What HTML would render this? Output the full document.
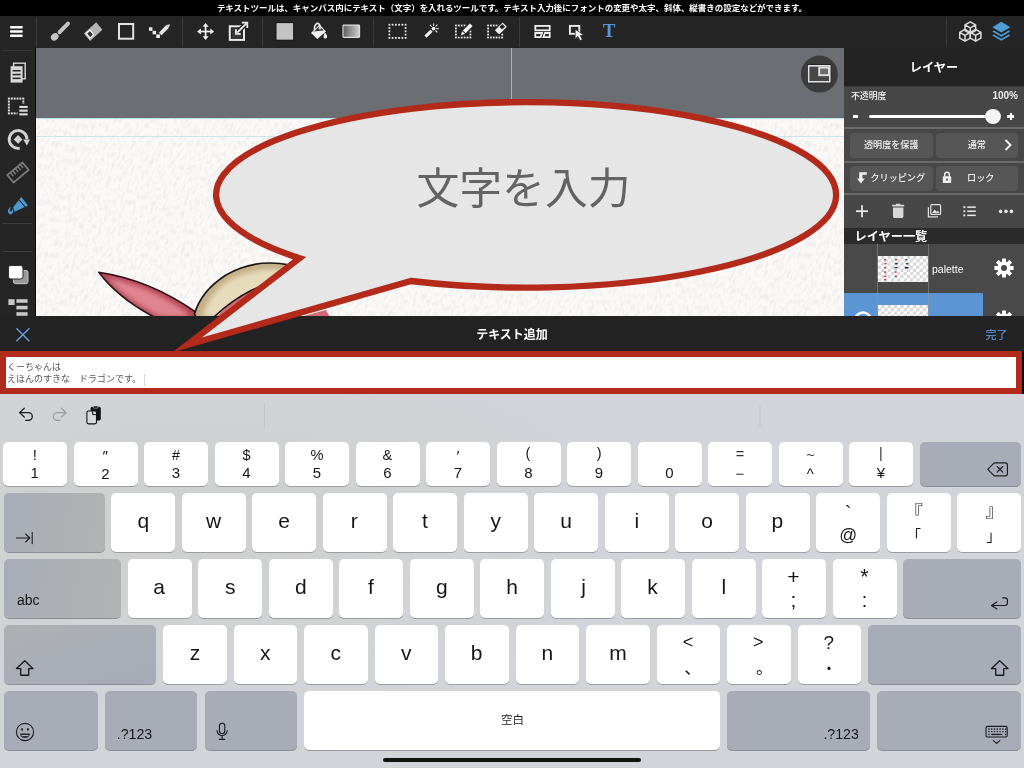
<!DOCTYPE html><html lang="ja"><head><meta charset="utf-8"><title>テキスト追加</title><style>
*{margin:0;padding:0;box-sizing:border-box}
html,body{width:1024px;height:768px;overflow:hidden;background:#000}
body{position:relative;font-family:"Liberation Sans","Noto Sans CJK JP",sans-serif;color:#fff}
.abs{position:absolute}
#top,#rp,#bar,#inp,#kb{will-change:transform}
#top{left:0;top:0;width:1024px;height:16px;background:#000;color:#fff;font-size:8.47px;font-weight:700;text-align:center;line-height:16px;white-space:nowrap;letter-spacing:0}
#tb{left:0;top:16px;width:1024px;height:32px;background:#252525}
#sb{left:0;top:48px;width:36px;height:268px;background:#252525;border-right:1px solid #0c0c0c}
.vsep{position:absolute;top:17px;width:1px;height:30px;background:#3b3b3b}
.hsep{position:absolute;left:2px;width:30px;height:1px;background:#3d3d3d}
#cv{left:36px;top:48px;width:808px;height:268px;background:#6b6e73;overflow:hidden}
#paper{left:0;top:70px;width:808px;height:198px;background:#faf9f7}
#rp{left:844px;top:48px;width:180px;height:268px;background:#474747;overflow:hidden}
#rph{left:0;top:0;width:180px;height:38px;background:#232323;text-align:center;font-weight:700;font-size:12.2px;line-height:40px}
.btn{position:absolute;height:25px;background:#565656;border-radius:4px;font-size:9.1px;font-weight:500;line-height:25px;text-align:center;color:#f2f2f2;white-space:nowrap}
.div{position:absolute;left:0;width:180px;height:2px;background:#6a6a6a}
#bar{left:0;top:316px;width:1024px;height:35px;background:#232323}
#inp{left:0;top:351px;width:1022px;height:43px;background:#fff;border:6px solid #b22a1b}
#inp div{position:absolute;left:1px;top:4px;font-size:9px;line-height:12.4px;color:#555;white-space:pre}
#kb{left:0;top:394px;width:1024px;height:374px;background:radial-gradient(ellipse 460px 190px at 190px 130px,#cfd1d1 0%,#cfd1d1 35%,rgba(207,209,209,0) 100%),#d2d4da}
.k{position:absolute;background:#fff;border-radius:5px;box-shadow:0 1px 0 #9c9ea3;color:#111;text-align:center}
.g{background:#a8acb7;box-shadow:0 1px 0 #8b8e96}
.gt{background:linear-gradient(100deg,#a8acb7 0%,#adb1b5 45%,#b0b3b1 100%)}
.gs{background:linear-gradient(165deg,#aeb1b2 0%,#aaaeb6 45%,#a7abb7 100%)}
.gl{position:absolute;line-height:1;white-space:nowrap}
</style></head><body>
<div id="top" class="abs">テキストツールは、キャンバス内にテキスト（文字）を入れるツールです。テキスト入力後にフォントの変更や太字、斜体、縦書きの設定などができます。</div>
<div id="tb" class="abs"></div>
<div class="vsep" style="left:36px"></div>
<div class="vsep" style="left:182px"></div>
<div class="vsep" style="left:262px"></div>
<div class="vsep" style="left:373px"></div>
<div class="vsep" style="left:519px"></div>
<div class="vsep" style="left:946px"></div>
<div id="sb" class="abs"></div>
<div id="cv" class="abs"><div id="paper" class="abs"></div></div>
<div id="rp" class="abs">
<div id="rph" class="abs">レイヤー</div>
<div class="abs" style="left:0;top:38px;width:180px;height:1px;background:#3a3a3a"></div>
<div class="abs" style="left:7px;top:42px;font-size:8.9px;font-weight:500;line-height:12px;color:#f4f4f4">不透明度</div>
<div class="abs" style="right:6px;top:42px;font-size:10px;font-weight:700;line-height:12px;color:#ececec">100%</div>
<div class="abs" style="left:9px;top:67.2px;width:5px;height:2.4px;background:#fff"></div>
<div class="abs" style="left:163.4px;top:67.3px;width:7px;height:2.4px;background:#fff"></div><div class="abs" style="left:165.7px;top:65px;width:2.4px;height:7px;background:#fff"></div>
<div class="abs" style="left:24.5px;top:67px;width:125px;height:3px;border-radius:1.5px;background:#fff"></div>
<div class="abs" style="left:141.4px;top:60.8px;width:15.2px;height:15.2px;border-radius:8px;background:#f4f4f4;box-shadow:0 0 1.5px rgba(0,0,0,.5)"></div>
<div class="div" style="top:79px"></div>
<div class="btn" style="left:6px;top:84.5px;width:82.5px">透明度を保護</div>
<div class="btn" style="left:91.5px;top:84.5px;width:82.5px">通常</div>
<svg class="abs" style="left:159px;top:90px" width="10" height="14" viewBox="0 0 10 14"><polyline points="2.5,2 7.5,7 2.5,12" fill="none" stroke="#f0f0f0" stroke-width="1.9"/></svg>
<div class="div" style="top:112.5px"></div>
<div class="btn" style="left:6px;top:117.5px;width:82.5px;padding-left:13px">クリッピング</div>
<svg class="abs" style="left:12px;top:123px" width="12" height="14" viewBox="0 0 12 14"><path d="M3.2 1.2 H10.8 V3.8 H6.4 V7.6 H8.8 L4.9 12.6 L1 7.6 H3.2Z" fill="#f0f0f0"/></svg>
<div class="btn" style="left:91.5px;top:117.5px;width:82.5px;padding-left:8px">ロック</div>
<svg class="abs" style="left:98px;top:123px" width="10" height="13" viewBox="0 0 10 13"><path d="M2.7 5.4 V3.6 A2.3 2.3 0 0 1 7.3 3.6 V5.4" fill="none" stroke="#f0f0f0" stroke-width="1.4"/><rect x="0.8" y="5.2" width="8.4" height="6.8" rx="0.8" fill="#f0f0f0"/><rect x="4.3" y="7.4" width="1.4" height="2.4" fill="#565656"/></svg>
<div class="div" style="top:145px"></div>
<svg class="abs" style="left:0;top:147px" width="180" height="33" viewBox="0 0 180 33">
<g stroke="#f0f0f0" stroke-width="1.7"><line x1="12" y1="16.2" x2="24" y2="16.2"/><line x1="18" y1="10.2" x2="18" y2="22.2"/></g>
<path d="M49 12.4 H59.4 V21.6 A1.4 1.4 0 0 1 58 23 H50.4 A1.4 1.4 0 0 1 49 21.6Z M48.2 9.8 H60.2 V11.4 H48.2Z M52 8.8 H56.4 V9.9 H52Z" fill="#d8d8d8"/>
<g fill="none" stroke="#e0e0e0" stroke-width="1.2"><rect x="86.8" y="9.6" width="9.8" height="9.8" rx="1"/><path d="M84.4 12.2 V21.8 H94"/></g>
<path d="M88 18 L90.6 14.6 L92.6 16.8 L93.8 15.8 L95.6 18Z" fill="#e0e0e0"/>
<g fill="#e8e8e8"><rect x="119.4" y="11.2" width="1.9" height="1.9"/><rect x="119.4" y="15.3" width="1.9" height="1.9"/><rect x="119.4" y="19.4" width="1.9" height="1.9"/><rect x="123.2" y="11.4" width="8.6" height="1.5"/><rect x="123.2" y="15.5" width="8.6" height="1.5"/><rect x="123.2" y="19.6" width="8.6" height="1.5"/></g>
<g fill="#e8e8e8"><circle cx="156.6" cy="16.4" r="1.8"/><circle cx="162" cy="16.4" r="1.8"/><circle cx="167.4" cy="16.4" r="1.8"/></g>
</svg>
<div class="abs" style="left:0;top:180px;width:180px;height:15.5px;background:#2b2b2b"></div>
<div class="abs" style="left:10.5px;top:179.5px;font-size:12.2px;font-weight:700;line-height:18px;color:#fff;white-space:nowrap">レイヤー一覧</div>
<div class="abs" style="left:0;top:195.5px;width:180px;height:50px;background:#494949"></div>
<div class="abs" style="left:0;top:245px;width:139px;height:23px;background:#5b95d4"></div>
<div class="abs" style="left:139px;top:245px;width:41px;height:23px;background:#494949"></div>
<div class="abs" style="left:33px;top:195.5px;width:1px;height:73px;background:rgba(150,150,150,.55)"></div>
<div class="abs" style="left:84px;top:195.5px;width:1px;height:73px;background:rgba(150,150,150,.55)"></div>
<div class="abs" style="left:34px;top:207.5px;width:50px;height:26.5px;background-color:#fff;background-image:linear-gradient(45deg,#d4d4d4 25%,transparent 25%,transparent 75%,#d4d4d4 75%),linear-gradient(45deg,#d4d4d4 25%,transparent 25%,transparent 75%,#d4d4d4 75%);background-size:6.4px 6.4px;background-position:0 0,3.2px 3.2px"></div><div class="abs" style="left:34px;top:257px;width:50px;height:11px;background-color:#fff;background-image:linear-gradient(45deg,#d4d4d4 25%,transparent 25%,transparent 75%,#d4d4d4 75%),linear-gradient(45deg,#d4d4d4 25%,transparent 25%,transparent 75%,#d4d4d4 75%);background-size:6.4px 6.4px;background-position:0 0,3.2px 3.2px"></div>
<svg class="abs" style="left:34px;top:207.5px" width="50" height="27" viewBox="0 0 50 27"><g fill="#b33"><rect x="6" y="3" width="2" height="1.4"/><rect x="6.6" y="7" width="2" height="1.4"/><rect x="6" y="11" width="2" height="1.4"/><rect x="6" y="15.4" width="2" height="1.4"/><rect x="6.4" y="19.6" width="2" height="1.4"/><rect x="6" y="23" width="2" height="1.4"/><rect x="17" y="3" width="2" height="1.4"/><rect x="16.6" y="15.4" width="2" height="1.4"/><rect x="17" y="19.6" width="2" height="1.4"/></g><g fill="#246"><rect x="17" y="7" width="3" height="1.4"/><rect x="16.4" y="11" width="3" height="1.4"/><rect x="27.4" y="3" width="2" height="1.4"/><rect x="28" y="7" width="2.4" height="1.4"/></g><rect x="27" y="11" width="3.4" height="1.4" fill="#111"/></svg>
<div class="abs" style="left:88px;top:214.5px;font-size:10.5px;line-height:12px;color:#fff">palette</div>
<svg class="abs" style="left:149.5px;top:210px" width="20" height="20" viewBox="-10 -10 20 20"><g fill="#fff"><circle r="6.6"/><rect x="-2" y="-9.6" width="4" height="5" rx="0.6" transform="rotate(0)"/><rect x="-2" y="-9.6" width="4" height="5" rx="0.6" transform="rotate(45)"/><rect x="-2" y="-9.6" width="4" height="5" rx="0.6" transform="rotate(90)"/><rect x="-2" y="-9.6" width="4" height="5" rx="0.6" transform="rotate(135)"/><rect x="-2" y="-9.6" width="4" height="5" rx="0.6" transform="rotate(180)"/><rect x="-2" y="-9.6" width="4" height="5" rx="0.6" transform="rotate(225)"/><rect x="-2" y="-9.6" width="4" height="5" rx="0.6" transform="rotate(270)"/><rect x="-2" y="-9.6" width="4" height="5" rx="0.6" transform="rotate(315)"/></g><circle r="3" fill="#494949"/></svg>
<svg class="abs" style="left:149.5px;top:261.5px" width="20" height="20" viewBox="-10 -10 20 20"><g fill="#fff"><circle r="6.6"/><rect x="-2" y="-9.6" width="4" height="5" rx="0.6" transform="rotate(0)"/><rect x="-2" y="-9.6" width="4" height="5" rx="0.6" transform="rotate(45)"/><rect x="-2" y="-9.6" width="4" height="5" rx="0.6" transform="rotate(90)"/><rect x="-2" y="-9.6" width="4" height="5" rx="0.6" transform="rotate(135)"/><rect x="-2" y="-9.6" width="4" height="5" rx="0.6" transform="rotate(180)"/><rect x="-2" y="-9.6" width="4" height="5" rx="0.6" transform="rotate(225)"/><rect x="-2" y="-9.6" width="4" height="5" rx="0.6" transform="rotate(270)"/><rect x="-2" y="-9.6" width="4" height="5" rx="0.6" transform="rotate(315)"/></g><circle r="3" fill="#494949"/></svg>
<svg class="abs" style="left:8px;top:258px" width="22" height="12" viewBox="0 0 22 12"><circle cx="11" cy="14.5" r="8" fill="none" stroke="#fff" stroke-width="2.6"/></svg>
</div>

<svg class="abs" style="left:0;top:0" width="1024" height="316" viewBox="0 0 1024 316">
<!-- hamburger -->
<g fill="#fff"><rect x="10" y="26.1" width="12.8" height="2.4" rx="1"/><rect x="10" y="30.3" width="12.8" height="2.4" rx="1"/><rect x="10" y="34.5" width="12.8" height="2.4" rx="1"/></g>
<!-- brush -->
<g stroke="#c4c4c4" fill="#c4c4c4"><line x1="68" y1="23.6" x2="59.6" y2="32.2" stroke-width="4" stroke-linecap="round"/><ellipse cx="54.7" cy="36.9" rx="4.1" ry="3.4" transform="rotate(-40 54.7 36.9)" stroke="none"/></g>
<!-- eraser -->
<polygon points="83.9,33.4 96.2,22.2 102.4,29.7 90.1,40.9" fill="#b4b4b4"/>
<polygon points="86.3,33.5 89.9,30.2 93.6,34.7 90,38" fill="#303030" stroke="#f4f4f4" stroke-width="1.3"/>
<!-- square -->
<rect x="119" y="24" width="14.2" height="14.7" fill="none" stroke="#e2e2e2" stroke-width="2"/>
<!-- dot pen -->
<g fill="#f0f0f0"><rect x="148.9" y="27.3" width="3.5" height="3.5"/><rect x="152.6" y="30.8" width="3.5" height="3.5"/><rect x="156.3" y="34.4" width="3.6" height="3.6"/></g>
<line x1="160.2" y1="34" x2="167.6" y2="26.4" stroke="#e4e4e4" stroke-width="3.8"/><polygon points="166.3,25 169,27.6 169.9,24.2" fill="#e4e4e4"/>
<!-- move -->
<g stroke="#f0f0f0" stroke-width="1.7" fill="none"><line x1="198.6" y1="31.5" x2="212.6" y2="31.5"/><line x1="205.6" y1="24.5" x2="205.6" y2="38.5"/></g>
<g fill="#f0f0f0"><polygon points="205.6,23 202.6,26.8 208.6,26.8"/><polygon points="205.6,40 202.6,36.2 208.6,36.2"/><polygon points="197.1,31.5 200.9,28.5 200.9,34.5"/><polygon points="214.1,31.5 210.3,28.5 210.3,34.5"/></g>
<!-- transform/export -->
<rect x="229.8" y="26.3" width="14.2" height="13.6" fill="none" stroke="#eaeaea" stroke-width="2"/>
<rect x="232.2" y="28.6" width="9.4" height="9" fill="#3a3a3a"/>
<line x1="237.3" y1="32.5" x2="246.5" y2="23.3" stroke="#252525" stroke-width="4.6"/>
<line x1="237.3" y1="32.5" x2="246.5" y2="23.3" stroke="#eaeaea" stroke-width="1.8"/>
<polyline points="241.8,22.6 247.3,22.6 247.3,28.1" fill="none" stroke="#eaeaea" stroke-width="1.8"/>
<polyline points="236,29.2 236,33.9 240.7,33.9" fill="none" stroke="#eaeaea" stroke-width="1.8"/>
<!-- filled square -->
<rect x="276" y="22.6" width="17.7" height="17.6" fill="#c3c3c3" stroke="#111" stroke-width="1"/>
<!-- bucket -->
<g>
<polygon points="311,33 319.5,24.6 326,31.5 317.3,38.9" fill="#f2f2f2"/>
<polygon points="313.5,31.6 319.4,26.2 323.6,30.4" fill="#3a3a3a"/>
<path d="M314.6 30.5 C313.6 24.5 317.2 22.4 319 24 C320.4 25.4 320.2 28 319.6 29.4" fill="none" stroke="#f2f2f2" stroke-width="1.5"/>
<path d="M324.6 32.2 C327.2 34.5 327.6 36.8 326.6 38 C325.7 39 323.9 38.7 323.6 37.2 C323.3 35.8 324.4 34.4 324.6 32.2Z" fill="#f2f2f2"/>
</g>
<!-- gradient -->
<defs><linearGradient id="gr" x1="0" y1="0" x2="1" y2="0"><stop offset="0" stop-color="#5e5e5e"/><stop offset="1" stop-color="#cfcfcf"/></linearGradient></defs>
<rect x="343" y="25.1" width="16.6" height="12.3" fill="url(#gr)" stroke="#e0e0e0" stroke-width="1.1" rx="0.8"/>
<rect x="388.50" y="23.80" width="1.8" height="1.8" fill="#e8e8e8"/><rect x="388.50" y="37.00" width="1.8" height="1.8" fill="#e8e8e8"/><rect x="391.74" y="23.80" width="1.8" height="1.8" fill="#e8e8e8"/><rect x="391.74" y="37.00" width="1.8" height="1.8" fill="#e8e8e8"/><rect x="394.98" y="23.80" width="1.8" height="1.8" fill="#e8e8e8"/><rect x="394.98" y="37.00" width="1.8" height="1.8" fill="#e8e8e8"/><rect x="398.22" y="23.80" width="1.8" height="1.8" fill="#e8e8e8"/><rect x="398.22" y="37.00" width="1.8" height="1.8" fill="#e8e8e8"/><rect x="401.46" y="23.80" width="1.8" height="1.8" fill="#e8e8e8"/><rect x="401.46" y="37.00" width="1.8" height="1.8" fill="#e8e8e8"/><rect x="404.70" y="23.80" width="1.8" height="1.8" fill="#e8e8e8"/><rect x="404.70" y="37.00" width="1.8" height="1.8" fill="#e8e8e8"/><rect x="388.50" y="27.10" width="1.8" height="1.8" fill="#e8e8e8"/><rect x="404.70" y="27.10" width="1.8" height="1.8" fill="#e8e8e8"/><rect x="388.50" y="30.40" width="1.8" height="1.8" fill="#e8e8e8"/><rect x="404.70" y="30.40" width="1.8" height="1.8" fill="#e8e8e8"/><rect x="388.50" y="33.70" width="1.8" height="1.8" fill="#e8e8e8"/><rect x="404.70" y="33.70" width="1.8" height="1.8" fill="#e8e8e8"/>
<!-- wand -->
<line x1="425.5" y1="36.6" x2="431.6" y2="30.6" stroke="#f0f0f0" stroke-width="3"/>
<circle cx="433.6" cy="28.6" r="1.9" fill="#f0f0f0"/>
<g stroke="#e0e0e0" stroke-width="1.1"><line x1="433.6" y1="23.6" x2="433.6" y2="26"/><line x1="436.2" y1="28.6" x2="438.8" y2="28.6"/><line x1="435.5" y1="26.7" x2="437.5" y2="24.7"/><line x1="435.5" y1="30.5" x2="437.3" y2="32.3"/><line x1="431.7" y1="26.7" x2="429.9" y2="24.9"/></g>
<rect x="455.00" y="24.60" width="1.8" height="1.8" fill="#e8e8e8"/><rect x="455.00" y="36.60" width="1.8" height="1.8" fill="#e8e8e8"/><rect x="457.90" y="24.60" width="1.8" height="1.8" fill="#e8e8e8"/><rect x="457.90" y="36.60" width="1.8" height="1.8" fill="#e8e8e8"/><rect x="460.80" y="24.60" width="1.8" height="1.8" fill="#e8e8e8"/><rect x="460.80" y="36.60" width="1.8" height="1.8" fill="#e8e8e8"/><rect x="463.70" y="24.60" width="1.8" height="1.8" fill="#e8e8e8"/><rect x="463.70" y="36.60" width="1.8" height="1.8" fill="#e8e8e8"/><rect x="466.60" y="24.60" width="1.8" height="1.8" fill="#e8e8e8"/><rect x="466.60" y="36.60" width="1.8" height="1.8" fill="#e8e8e8"/><rect x="469.50" y="24.60" width="1.8" height="1.8" fill="#e8e8e8"/><rect x="469.50" y="36.60" width="1.8" height="1.8" fill="#e8e8e8"/><rect x="455.00" y="27.60" width="1.8" height="1.8" fill="#e8e8e8"/><rect x="469.50" y="27.60" width="1.8" height="1.8" fill="#e8e8e8"/><rect x="455.00" y="30.60" width="1.8" height="1.8" fill="#e8e8e8"/><rect x="469.50" y="30.60" width="1.8" height="1.8" fill="#e8e8e8"/><rect x="455.00" y="33.60" width="1.8" height="1.8" fill="#e8e8e8"/><rect x="469.50" y="33.60" width="1.8" height="1.8" fill="#e8e8e8"/>
<!-- select pen -->
<polygon points="460.5,35.5 462,31 470,22.8 473.2,25.8 465.2,34" fill="#252525" stroke="#252525" stroke-width="2.4"/>
<polygon points="460.8,35.2 462.3,31.3 465,33.9" fill="#f2f2f2"/>
<polygon points="462.9,30.6 469.9,23.4 472.6,26 465.6,33.2" fill="#f2f2f2"/>
<rect x="487.20" y="24.60" width="1.8" height="1.8" fill="#e8e8e8"/><rect x="487.20" y="36.60" width="1.8" height="1.8" fill="#e8e8e8"/><rect x="490.02" y="24.60" width="1.8" height="1.8" fill="#e8e8e8"/><rect x="490.02" y="36.60" width="1.8" height="1.8" fill="#e8e8e8"/><rect x="492.84" y="24.60" width="1.8" height="1.8" fill="#e8e8e8"/><rect x="492.84" y="36.60" width="1.8" height="1.8" fill="#e8e8e8"/><rect x="495.66" y="24.60" width="1.8" height="1.8" fill="#e8e8e8"/><rect x="495.66" y="36.60" width="1.8" height="1.8" fill="#e8e8e8"/><rect x="498.48" y="24.60" width="1.8" height="1.8" fill="#e8e8e8"/><rect x="498.48" y="36.60" width="1.8" height="1.8" fill="#e8e8e8"/><rect x="501.30" y="24.60" width="1.8" height="1.8" fill="#e8e8e8"/><rect x="501.30" y="36.60" width="1.8" height="1.8" fill="#e8e8e8"/><rect x="487.20" y="27.60" width="1.8" height="1.8" fill="#e8e8e8"/><rect x="501.30" y="27.60" width="1.8" height="1.8" fill="#e8e8e8"/><rect x="487.20" y="30.60" width="1.8" height="1.8" fill="#e8e8e8"/><rect x="501.30" y="30.60" width="1.8" height="1.8" fill="#e8e8e8"/><rect x="487.20" y="33.60" width="1.8" height="1.8" fill="#e8e8e8"/><rect x="501.30" y="33.60" width="1.8" height="1.8" fill="#e8e8e8"/>
<!-- select eraser -->
<polygon points="494.5,30.2 502.6,22 507.3,26.8 499.2,35" fill="#252525" stroke="#252525" stroke-width="2.2"/>
<polygon points="494.9,30.2 502.6,22.5 506.9,26.8 499.2,34.5" fill="#f2f2f2"/>
<polygon points="499.4,26.9 502.3,24 505,26.7 502.1,29.6" fill="#252525"/>
<!-- panel layout icon -->
<g fill="none" stroke="#f0f0f0" stroke-width="1.8"><rect x="535.3" y="25.9" width="14.4" height="4.4"/><polygon points="535.3,33 542,33 540.6,37.1 535.3,37.1"/><polygon points="545,33 549.7,33 549.7,37.1 543.4,37.1"/></g>
<!-- select cursor -->
<rect x="569.9" y="25.9" width="9.4" height="7.9" fill="none" stroke="#f0f0f0" stroke-width="1.9"/>
<polygon points="575.2,29.2 575.2,38.9 577.9,36.6 580.2,40.6 582.4,39.4 580.2,35.6 583.6,35" fill="#f6f6f6" stroke="#252525" stroke-width="0.7"/>
<!-- cubes -->
<g fill="none" stroke="#dcdcdc" stroke-width="1.5" stroke-linejoin="round">
<path d="M970.3 21.8 L975.6 24.8 L975.6 30.6 L970.3 33.6 L965 30.6 L965 24.8Z M965 24.8 L970.3 27.8 L975.6 24.8 M970.3 27.8 L970.3 33.6"/>
<path d="M965 30.8 L970.3 33.8 L970.3 39.6 L965 42.6 L959.7 39.6 L959.7 33.8Z M959.7 33.8 L965 36.8 L970.3 33.8 M965 36.8 L965 42.6" transform="translate(0,-1.4)"/>
<path d="M975.6 30.8 L980.9 33.8 L980.9 39.6 L975.6 42.6 L970.3 39.6 L970.3 33.8Z M970.3 33.8 L975.6 36.8 L980.9 33.8 M975.6 36.8 L975.6 42.6" transform="translate(0,-1.4)"/>
</g>
<!-- layers -->
<g fill="#4d9fd6"><polygon points="1001.3,21.8 1010.3,27.2 1001.3,32.6 992.3,27.2"/>
<polygon points="993.9,30.4 1001.3,34.8 1008.7,30.4 1010.3,31.4 1001.3,36.8 992.3,31.4"/>
<polygon points="993.9,34.4 1001.3,38.8 1008.7,34.4 1010.3,35.4 1001.3,40.8 992.3,35.4"/></g>
<!-- T -->
<text x="609" y="37" text-anchor="middle" font-family="'Liberation Serif',serif" font-weight="700" font-size="19" fill="#5b93d3">T</text>

<!-- sidebar: documents -->
<rect x="13.6" y="63.2" width="11.6" height="15.6" fill="#252525" stroke="#d8d8d8" stroke-width="1.4"/>
<rect x="10.6" y="66.2" width="12" height="16.4" fill="#d8d8d8"/>
<g fill="#252525"><rect x="12.6" y="70" width="8" height="1.5"/><rect x="12.6" y="73.8" width="8" height="1.5"/><rect x="12.6" y="77.6" width="8" height="1.5"/></g>
<rect x="7.90" y="97.60" width="2" height="2" fill="#dcdcdc"/><rect x="7.90" y="112.40" width="2" height="2" fill="#dcdcdc"/><rect x="10.78" y="97.60" width="2" height="2" fill="#dcdcdc"/><rect x="10.78" y="112.40" width="2" height="2" fill="#dcdcdc"/><rect x="13.66" y="97.60" width="2" height="2" fill="#dcdcdc"/><rect x="13.66" y="112.40" width="2" height="2" fill="#dcdcdc"/><rect x="16.54" y="97.60" width="2" height="2" fill="#dcdcdc"/><rect x="16.54" y="112.40" width="2" height="2" fill="#dcdcdc"/><rect x="19.42" y="97.60" width="2" height="2" fill="#dcdcdc"/><rect x="19.42" y="112.40" width="2" height="2" fill="#dcdcdc"/><rect x="22.30" y="97.60" width="2" height="2" fill="#dcdcdc"/><rect x="22.30" y="112.40" width="2" height="2" fill="#dcdcdc"/><rect x="7.90" y="100.56" width="2" height="2" fill="#dcdcdc"/><rect x="22.30" y="100.56" width="2" height="2" fill="#dcdcdc"/><rect x="7.90" y="103.52" width="2" height="2" fill="#dcdcdc"/><rect x="22.30" y="103.52" width="2" height="2" fill="#dcdcdc"/><rect x="7.90" y="106.48" width="2" height="2" fill="#dcdcdc"/><rect x="22.30" y="106.48" width="2" height="2" fill="#dcdcdc"/><rect x="7.90" y="109.44" width="2" height="2" fill="#dcdcdc"/><rect x="22.30" y="109.44" width="2" height="2" fill="#dcdcdc"/>
<rect x="17.5" y="104" width="12" height="12.5" fill="#252525"/>
<g fill="#dcdcdc"><rect x="19.3" y="105.9" width="8.4" height="2.1"/><rect x="19.3" y="109.6" width="8.4" height="2.1"/><rect x="19.3" y="113.3" width="8.4" height="2.1"/></g>
<!-- rotate -->
<path d="M19.7 148.2 A8.9 8.9 0 1 1 27 139.2" fill="none" stroke="#d2d2d2" stroke-width="2.9"/>
<polygon points="23.2,139.4 30,139.4 26.9,145.6" fill="#d2d2d2"/>
<polygon points="18.1,135 22.5,139.4 18.1,143.8 13.7,139.4" fill="#d2d2d2"/>
<!-- ruler -->
<g transform="rotate(-40 18 172.5)"><rect x="8.2" y="167.6" width="19.6" height="9.8" fill="none" stroke="#7d7d7d" stroke-width="1.7"/><g stroke="#7d7d7d" stroke-width="1.4"><line x1="12" y1="168" x2="12" y2="172.4"/><line x1="15.2" y1="168" x2="15.2" y2="172.4"/><line x1="18.4" y1="168" x2="18.4" y2="172.4"/><line x1="21.6" y1="168" x2="21.6" y2="172.4"/><line x1="24.8" y1="168" x2="24.8" y2="172.4"/></g></g>
<!-- pen (blue) -->
<g fill="#4b9ad2"><polygon points="21.3,197 28,205.6 14.6,211.8 13.2,207.2"/><path d="M12.2 208.4 L13.4 212.2 L11 214.4 C9 214.6 7.6 212.6 8 210.6 C8.3 209.2 9.6 207.6 11 206.6 L9.6 210.6 L11.4 212Z"/></g>
<line x1="18.8" y1="199.5" x2="25.6" y2="207.5" stroke="#252525" stroke-width="1.1"/>
<!-- swatches -->
<rect x="13.4" y="270.4" width="14.6" height="13.3" rx="2.2" fill="#9a9a9a" stroke="#c6c6c6" stroke-width="1"/>
<rect x="8.4" y="265.4" width="14.6" height="13.6" rx="2.4" fill="#fdfdfd" stroke="#252525" stroke-width="1"/>
<!-- list -->
<g fill="#c8c8c8"><rect x="8.4" y="299.2" width="6.2" height="5.8"/><rect x="16.4" y="299.2" width="11.2" height="3.6"/><rect x="16.4" y="305.8" width="11.2" height="3.6"/><rect x="16.4" y="312.2" width="11.2" height="3.6"/></g>
<!-- circle button -->
<circle cx="819.4" cy="74.1" r="18.5" fill="#3c3c3c"/>
<rect x="807.2" y="64.4" width="24" height="18.8" fill="#151515"/>
<rect x="808.6" y="65.8" width="21.2" height="16" fill="#484848" stroke="#e2e2e2" stroke-width="1.6"/>
<rect x="819.2" y="67.6" width="9.8" height="7.6" fill="#6c6c6c" stroke="#e2e2e2" stroke-width="1.9"/>
</svg>

<div class="hsep" style="top:50px;background:#343434"></div><div class="hsep" style="top:223px"></div><div class="hsep" style="top:251px"></div>
<div id="bar" class="abs">
<svg class="abs" style="left:15px;top:11px" width="16" height="16" viewBox="0 0 16 16"><g stroke="#6b9bd8" stroke-width="1.5"><line x1="1.4" y1="1.2" x2="14.4" y2="14.2"/><line x1="14.4" y1="1.2" x2="1.4" y2="14.2"/></g></svg>
<div class="abs" style="left:0;top:0;width:1024px;text-align:center;font-size:12px;font-weight:700;line-height:39px;color:#fff">テキスト追加</div>
<div class="abs" style="right:16.5px;top:0;font-size:11px;font-weight:500;line-height:38px;color:#5689cc">完了</div>
</div>

<svg class="abs" style="left:0;top:0" width="1024" height="768" viewBox="0 0 1024 768">
<defs>
<filter id="ptex" x="0" y="0" width="100%" height="100%"><feTurbulence type="fractalNoise" baseFrequency="0.34 0.17" numOctaves="2" seed="11" result="n"/><feColorMatrix type="matrix" values="0 0 0 0 0.62  0 0 0 0 0.62  0 0 0 0 0.6  1.6 0 0 0 -0.72"/></filter>
<linearGradient id="ear" x1="0" y1="0" x2="1" y2="1"><stop offset="0" stop-color="#c9505f"/><stop offset="0.55" stop-color="#e07482"/><stop offset="1" stop-color="#c25261"/></linearGradient>
<filter id="soft" x="-20%" y="-20%" width="140%" height="140%"><feGaussianBlur stdDeviation="2.6"/></filter>
<clipPath id="earclip"><path d="M98.8 272.3 Q150 280 195.5 312 L197 317 L154 317 Q118 298 98.8 272.3Z"/></clipPath>
<clipPath id="hornclip"><path d="M194.5 314 Q201 291 226 275 Q255 258 290 265 L300 270 L252 290 Q232 300 214 317 L196 317Z"/></clipPath>
<clipPath id="cvclip"><rect x="36.5" y="48" width="807.5" height="268"/></clipPath>
</defs>
<g clip-path="url(#cvclip)">
<rect x="36" y="118" width="900" height="198" filter="url(#ptex)" opacity="0.5" transform="skewX(-14)" />
<rect x="36" y="118" width="808" height="1" fill="#b6e1e8"/>
<rect x="36" y="136" width="808" height="1" fill="#c6e8ec"/>
<rect x="511" y="48" width="1" height="70" fill="#7cc4d0"/>
<path d="M216 317 Q232 300 252 290 L300 290 L300 317Z" fill="#d46a78"/>
<g clip-path="url(#earclip)"><path d="M98.8 272.3 Q150 280 195.5 312 L197 317 L154 317 Q118 298 98.8 272.3Z" fill="#b04453"/><path d="M106 277 Q150 286 188 313 L188 317 L160 317 Q124 298 106 277Z" fill="#e08490" filter="url(#soft)"/></g>
<path d="M98.8 272.3 Q150 280 195.5 312 L197 317 L154 317 Q118 298 98.8 272.3Z" fill="none" stroke="#2b1216" stroke-width="1.6" stroke-linejoin="round"/>
<g clip-path="url(#hornclip)"><rect x="190" y="255" width="115" height="65" fill="#c4b088"/><path d="M203 317 Q208 294 230 280 Q258 265 292 271 L300 276 L256 296 Q238 305 224 317Z" fill="#e6dbbb" filter="url(#soft)"/></g>
<path d="M194.5 314 Q201 291 226 275 Q255 258 290 265 L300 270 L252 290 Q232 300 214 317 L196 317Z" fill="none" stroke="#1a1410" stroke-width="1.6" stroke-linejoin="round"/>
<path d="M300 317 L326 310 L330 317Z" fill="#d46a78"/>
</g>
</svg>
<svg class="abs" style="left:0;top:0" width="1024" height="768" viewBox="0 0 1024 768">
<path d="M299.6 258.2 A310 92.75 0 1 1 411 281 L187 345Z" fill="#e6e6e6" stroke="#b3291a" stroke-width="6.3" stroke-linejoin="miter" stroke-miterlimit="12"/>
<text x="523.5" y="204" text-anchor="middle" font-family="'Liberation Sans','Noto Sans CJK JP',sans-serif" font-weight="400" font-size="42.8" fill="#636363">文字を入力</text>
</svg>

<div id="inp" class="abs"><div>くーちゃんは
えほんのすきな　ドラゴンです。</div><i style="position:absolute;left:137.5px;top:16.5px;width:1px;height:12px;background:#d8d8dc"></i></div>
<div id="kb" class="abs"><div class="k " style="left:3.25px;top:48px;width:63.75px;height:44px"></div><div class="k " style="left:73.75px;top:48px;width:63.75px;height:44px"></div><div class="k " style="left:144.25px;top:48px;width:63.75px;height:44px"></div><div class="k " style="left:214.75px;top:48px;width:63.75px;height:44px"></div><div class="k " style="left:285.25px;top:48px;width:63.75px;height:44px"></div><div class="k " style="left:355.75px;top:48px;width:63.75px;height:44px"></div><div class="k " style="left:426.25px;top:48px;width:63.75px;height:44px"></div><div class="k " style="left:496.75px;top:48px;width:63.75px;height:44px"></div><div class="k " style="left:567.25px;top:48px;width:63.75px;height:44px"></div><div class="k " style="left:637.75px;top:48px;width:63.75px;height:44px"></div><div class="k " style="left:708.25px;top:48px;width:63.75px;height:44px"></div><div class="k " style="left:778.75px;top:48px;width:63.75px;height:44px"></div><div class="k " style="left:849.25px;top:48px;width:63.75px;height:44px"></div><div class="k g" style="left:919.5px;top:48px;width:101px;height:44px"></div><div class="k g gt" style="left:3.5px;top:99px;width:101px;height:59px"></div><div class="k " style="left:111.25px;top:99px;width:63.75px;height:59px"></div><div class="k " style="left:181.75px;top:99px;width:63.75px;height:59px"></div><div class="k " style="left:252.25px;top:99px;width:63.75px;height:59px"></div><div class="k " style="left:322.75px;top:99px;width:63.75px;height:59px"></div><div class="k " style="left:393.25px;top:99px;width:63.75px;height:59px"></div><div class="k " style="left:463.75px;top:99px;width:63.75px;height:59px"></div><div class="k " style="left:534.25px;top:99px;width:63.75px;height:59px"></div><div class="k " style="left:604.75px;top:99px;width:63.75px;height:59px"></div><div class="k " style="left:675.25px;top:99px;width:63.75px;height:59px"></div><div class="k " style="left:745.75px;top:99px;width:63.75px;height:59px"></div><div class="k " style="left:816.25px;top:99px;width:63.75px;height:59px"></div><div class="k " style="left:886.75px;top:99px;width:63.75px;height:59px"></div><div class="k " style="left:957.25px;top:99px;width:63.75px;height:59px"></div><div class="k g gt" style="left:3.5px;top:165px;width:117px;height:59px"></div><div class="k " style="left:127.75px;top:165px;width:63.75px;height:59px"></div><div class="k " style="left:198.25px;top:165px;width:63.75px;height:59px"></div><div class="k " style="left:268.75px;top:165px;width:63.75px;height:59px"></div><div class="k " style="left:339.25px;top:165px;width:63.75px;height:59px"></div><div class="k " style="left:409.75px;top:165px;width:63.75px;height:59px"></div><div class="k " style="left:480.25px;top:165px;width:63.75px;height:59px"></div><div class="k " style="left:550.75px;top:165px;width:63.75px;height:59px"></div><div class="k " style="left:621.25px;top:165px;width:63.75px;height:59px"></div><div class="k " style="left:691.75px;top:165px;width:63.75px;height:59px"></div><div class="k " style="left:762.25px;top:165px;width:63.75px;height:59px"></div><div class="k " style="left:832.75px;top:165px;width:63.75px;height:59px"></div><div class="k g" style="left:903px;top:165px;width:117.5px;height:59px"></div><div class="k g gs" style="left:3.5px;top:231px;width:152.5px;height:59px"></div><div class="k " style="left:163px;top:231px;width:63.75px;height:59px"></div><div class="k " style="left:233.5px;top:231px;width:63.75px;height:59px"></div><div class="k " style="left:304px;top:231px;width:63.75px;height:59px"></div><div class="k " style="left:374.5px;top:231px;width:63.75px;height:59px"></div><div class="k " style="left:445px;top:231px;width:63.75px;height:59px"></div><div class="k " style="left:515.5px;top:231px;width:63.75px;height:59px"></div><div class="k " style="left:586px;top:231px;width:63.75px;height:59px"></div><div class="k " style="left:656.5px;top:231px;width:63.75px;height:59px"></div><div class="k " style="left:727px;top:231px;width:63.75px;height:59px"></div><div class="k " style="left:797.5px;top:231px;width:63.75px;height:59px"></div><div class="k g" style="left:868px;top:231px;width:152.5px;height:59px"></div><div class="k g" style="left:3.5px;top:297px;width:94px;height:59px"></div><div class="k g" style="left:105px;top:297px;width:92px;height:59px"></div><div class="k g" style="left:204.5px;top:297px;width:92.5px;height:59px"></div><div class="k " style="left:304px;top:297px;width:416px;height:59px"></div><div class="k g" style="left:727px;top:297px;width:142.5px;height:59px"></div><div class="k g" style="left:877px;top:297px;width:143.5px;height:59px"></div><span class="gl" style="left:32.86px;top:53.09px;font-size:15.00px;color:#161616">!</span><span class="gl" style="left:30.52px;top:71.49px;font-size:15.00px;color:#161616">1</span><span class="gl" style="left:102.52px;top:53.94px;font-size:15.50px;color:#161616">″</span><span class="gl" style="left:101.21px;top:71.59px;font-size:15.00px;color:#161616">2</span><span class="gl" style="left:172.02px;top:53.79px;font-size:14.20px;color:#161616">#</span><span class="gl" style="left:171.80px;top:71.49px;font-size:15.00px;color:#161616">3</span><span class="gl" style="left:242.41px;top:53.61px;font-size:14.60px;color:#161616">$</span><span class="gl" style="left:242.30px;top:71.40px;font-size:15.00px;color:#161616">4</span><span class="gl" style="left:310.45px;top:53.88px;font-size:14.60px;color:#161616">%</span><span class="gl" style="left:312.80px;top:71.40px;font-size:15.00px;color:#161616">5</span><span class="gl" style="left:382.41px;top:53.70px;font-size:14.60px;color:#161616">&amp;</span><span class="gl" style="left:383.21px;top:71.49px;font-size:15.00px;color:#161616">6</span><span class="gl" style="left:456.38px;top:54.04px;font-size:15.50px;color:#161616">′</span><span class="gl" style="left:453.71px;top:71.49px;font-size:15.00px;color:#161616">7</span><span class="gl" style="left:525.60px;top:52.11px;font-size:14.60px;color:#161616">(</span><span class="gl" style="left:524.30px;top:71.40px;font-size:15.00px;color:#161616">8</span><span class="gl" style="left:596.83px;top:52.11px;font-size:14.60px;color:#161616">)</span><span class="gl" style="left:594.71px;top:71.49px;font-size:15.00px;color:#161616">9</span><span class="gl" style="left:665.30px;top:71.49px;font-size:15.00px;color:#161616">0</span><span class="gl" style="left:735.64px;top:52.82px;font-size:14.60px;color:#333">=</span><span class="gl" style="left:735.52px;top:71.50px;font-size:15.00px;color:#333">−</span><span class="gl" style="left:806.14px;top:53.70px;font-size:14.60px;color:#333">~</span><span class="gl" style="left:806.86px;top:71.63px;font-size:15.00px;color:#161616">^</span><span class="gl" style="left:879.06px;top:52.35px;font-size:14.20px;color:#333">|</span><span class="gl" style="left:876.80px;top:71.49px;font-size:15.00px;color:#161616">¥</span><span class="gl" style="left:137.61px;top:115.82px;font-size:21.00px;color:#161616">q</span><span class="gl" style="left:206.01px;top:115.82px;font-size:21.00px;color:#161616">w</span><span class="gl" style="left:278.35px;top:115.82px;font-size:21.00px;color:#161616">e</span><span class="gl" style="left:350.69px;top:115.82px;font-size:21.00px;color:#161616">r</span><span class="gl" style="left:422.11px;top:115.82px;font-size:21.00px;color:#161616">t</span><span class="gl" style="left:490.38px;top:115.82px;font-size:21.00px;color:#161616">y</span><span class="gl" style="left:560.35px;top:115.82px;font-size:21.00px;color:#161616">u</span><span class="gl" style="left:634.39px;top:115.82px;font-size:21.00px;color:#161616">i</span><span class="gl" style="left:701.35px;top:115.82px;font-size:21.00px;color:#161616">o</span><span class="gl" style="left:771.59px;top:115.82px;font-size:21.00px;color:#161616">p</span><span class="gl" style="left:153.32px;top:182.02px;font-size:21.00px;color:#161616">a</span><span class="gl" style="left:225.01px;top:182.02px;font-size:21.00px;color:#161616">s</span><span class="gl" style="left:295.11px;top:182.02px;font-size:21.00px;color:#161616">d</span><span class="gl" style="left:368.11px;top:182.02px;font-size:21.00px;color:#161616">f</span><span class="gl" style="left:436.11px;top:182.02px;font-size:21.00px;color:#161616">g</span><span class="gl" style="left:506.22px;top:182.02px;font-size:21.00px;color:#161616">h</span><span class="gl" style="left:581.31px;top:182.02px;font-size:21.00px;color:#161616">j</span><span class="gl" style="left:647.22px;top:182.02px;font-size:21.00px;color:#161616">k</span><span class="gl" style="left:721.39px;top:182.02px;font-size:21.00px;color:#161616">l</span><span class="gl" style="left:189.76px;top:248.22px;font-size:21.00px;color:#161616">z</span><span class="gl" style="left:260.12px;top:248.22px;font-size:21.00px;color:#161616">x</span><span class="gl" style="left:330.49px;top:248.22px;font-size:21.00px;color:#161616">c</span><span class="gl" style="left:401.12px;top:248.22px;font-size:21.00px;color:#161616">v</span><span class="gl" style="left:470.84px;top:248.22px;font-size:21.00px;color:#161616">b</span><span class="gl" style="left:541.60px;top:248.22px;font-size:21.00px;color:#161616">n</span><span class="gl" style="left:609.21px;top:248.22px;font-size:21.00px;color:#161616">m</span><span class="gl" style="left:844.93px;top:109.28px;font-size:19.00px;color:#161616">`</span><span class="gl" style="left:839.20px;top:132.83px;font-size:17.60px;color:#161616">@</span><span class="gl" style="left:904.64px;top:109.95px;font-size:18.00px;color:#161616">『</span><span class="gl" style="left:906.51px;top:135.08px;font-size:14.50px;color:#161616">「</span><span class="gl" style="left:985.46px;top:108.10px;font-size:18.00px;color:#161616">』</span><span class="gl" style="left:986.59px;top:135.01px;font-size:14.50px;color:#161616">」</span><span class="gl" style="left:787.29px;top:171.60px;font-size:21.13px;color:#161616">+</span><span class="gl" style="left:790.62px;top:195.66px;font-size:20.92px;color:#161616">;</span><span class="gl" style="left:860.33px;top:172.81px;font-size:21.52px;color:#161616">*</span><span class="gl" style="left:861.78px;top:196.61px;font-size:19.81px;color:#161616">:</span><span class="gl" style="left:682.70px;top:238.75px;font-size:18.05px;color:#161616">&lt;</span><span class="gl" style="left:752.90px;top:238.75px;font-size:18.05px;color:#161616">&gt;</span><span class="gl" style="left:823.50px;top:239.81px;font-size:18.86px;color:#161616">?</span><span class="gl" style="left:684.31px;top:266.24px;font-size:17.00px;color:#161616">、</span><span class="gl" style="left:755.91px;top:266.14px;font-size:17.00px;color:#161616">。</span><span class="gl" style="left:821.50px;top:266.97px;font-size:15.00px;color:#161616">・</span><span class="gl" style="left:16.93px;top:198.85px;font-size:14.00px;color:#161616">abc</span><span class="gl" style="left:116.70px;top:332.78px;font-size:14.20px;color:#161616">.?123</span><span class="gl" style="left:823.39px;top:332.78px;font-size:14.20px;color:#161616">.?123</span><span class="gl" style="left:500.93px;top:320.98px;font-size:11.50px;color:#222">空白</span>
<svg class="abs" style="left:0;top:0" width="1024" height="374" viewBox="0 394 1024 374">
<g fill="none" stroke="#1c1c1e" stroke-width="1.3" stroke-linecap="round" stroke-linejoin="round">
<path d="M24.3 408.2 L19.6 412.6 L24.3 417"/><path d="M20 412.6 H28.4 A3.9 3.9 0 0 1 28.4 420.4 H25.8"/>
</g>
<g fill="none" stroke="#9b9da3" stroke-width="1.3" stroke-linecap="round" stroke-linejoin="round">
<path d="M61.4 408.2 L66.1 412.6 L61.4 417"/><path d="M65.7 412.6 H57.3 A3.9 3.9 0 0 0 57.3 420.4 H59.9"/>
</g>
<rect x="90.6" y="406.8" width="10.2" height="13.6" rx="1.6" fill="#111"/>
<rect x="93.4" y="406" width="4.6" height="2.2" rx="0.8" fill="#111" stroke="#d2d4da" stroke-width="0.6"/>
<rect x="86.9" y="411" width="9.6" height="12.9" rx="1.6" fill="#d6d8dd" stroke="#111" stroke-width="1.1"/>
<path d="M92.6 411.4 V414.6 H96" fill="none" stroke="#111" stroke-width="1"/>
<!-- separators in accessory bar -->
<rect x="264" y="403" width="1" height="25" fill="#c3c5cb"/><rect x="759.5" y="403" width="1" height="25" fill="#c3c5cb"/>
<!-- backspace -->
<path d="M987.7 469.3 L994.2 462.9 H1005.4 A2 2 0 0 1 1007.4 464.9 V473.8 A2 2 0 0 1 1005.4 475.8 H994.2Z" fill="none" stroke="#1c1c1e" stroke-width="1.15" stroke-linejoin="round"/>
<g stroke="#1c1c1e" stroke-width="1.1" stroke-linecap="round"><line x1="997.2" y1="466.5" x2="1002.8" y2="472.1"/><line x1="1002.8" y1="466.5" x2="997.2" y2="472.1"/></g>
<!-- tab -->
<g stroke="#1c1c1e" stroke-width="1.1" fill="none" stroke-linecap="round" stroke-linejoin="round"><line x1="16.4" y1="538" x2="29.6" y2="538"/><path d="M25.6 534 L29.8 538 L25.6 542"/><line x1="32.2" y1="532.6" x2="32.2" y2="543.6"/></g>
<!-- return -->
<g stroke="#1c1c1e" stroke-width="1.15" fill="none" stroke-linecap="round" stroke-linejoin="round"><path d="M1002.8 597.9 H1005 A2.4 2.4 0 0 1 1007.4 600.3 V603.1 A2.4 2.4 0 0 1 1005 605.5 H991.8"/><path d="M996.9 602 L991.5 605.5 L996.9 609"/></g>
<path d="M24.7 660.8 L32.9 668.6 H28.7 V675.2 H20.7 V668.6 H16.5Z" fill="none" stroke="#1c1c1e" stroke-width="1.35" stroke-linejoin="round"/><path d="M999.7 660.8 L1007.9000000000001 668.6 H1003.7 V675.2 H995.7 V668.6 H991.5Z" fill="none" stroke="#1c1c1e" stroke-width="1.35" stroke-linejoin="round"/>
<!-- emoji -->
<circle cx="25" cy="732" r="8.6" fill="none" stroke="#1c1c1e" stroke-width="1.1"/>
<path d="M20 733.4 H30 A5 4.6 0 0 1 20 733.4Z" fill="#2a2a2c"/><path d="M21.6 735.6 H28.4" stroke="#d0d2d8" stroke-width="0.9"/><ellipse cx="22.1" cy="729.4" rx="0.9" ry="1.3" fill="#1c1c1e"/><ellipse cx="27.9" cy="729.4" rx="0.9" ry="1.3" fill="#1c1c1e"/>
<!-- mic -->
<rect x="219.4" y="723.2" width="5.4" height="10.6" rx="2.7" fill="none" stroke="#1c1c1e" stroke-width="1.1"/>
<path d="M217 730.6 A5.1 5.1 0 0 0 227.2 730.6 M222.1 735.8 V739.2 M219.4 739.4 H224.8" fill="none" stroke="#1c1c1e" stroke-width="1.1" stroke-linecap="round"/>
<!-- hide kb -->
<rect x="986" y="726.4" width="21.2" height="10.6" rx="1.6" fill="none" stroke="#1c1c1e" stroke-width="1.1"/>
<g fill="#1c1c1e"><rect x="988.30" y="728.3" width="1.3" height="1.6"/><rect x="991.08" y="728.3" width="1.3" height="1.6"/><rect x="993.86" y="728.3" width="1.3" height="1.6"/><rect x="996.64" y="728.3" width="1.3" height="1.6"/><rect x="999.42" y="728.3" width="1.3" height="1.6"/><rect x="1002.20" y="728.3" width="1.3" height="1.6"/><rect x="1004.98" y="728.3" width="1.3" height="1.6"/><rect x="988.30" y="731" width="1.3" height="1.3"/><rect x="991.08" y="731" width="1.3" height="1.3"/><rect x="993.86" y="731" width="1.3" height="1.3"/><rect x="996.64" y="731" width="1.3" height="1.3"/><rect x="999.42" y="731" width="1.3" height="1.3"/><rect x="1002.20" y="731" width="1.3" height="1.3"/><rect x="1004.98" y="731" width="1.3" height="1.3"/><rect x="988.3" y="733.8" width="1.3" height="1.3"/><rect x="1004.9" y="733.8" width="1.3" height="1.3"/><rect x="991.2" y="733.8" width="11.2" height="1.3"/></g>
<path d="M993.4 740.6 L996.6 743.4 L999.8 740.6" fill="none" stroke="#1c1c1e" stroke-width="1.2" stroke-linecap="round" stroke-linejoin="round"/>
</svg>
<div class="abs" style="left:383px;top:363.6px;width:258.4px;height:4.6px;border-radius:2.3px;background:#111"></div></div>
</body></html>
